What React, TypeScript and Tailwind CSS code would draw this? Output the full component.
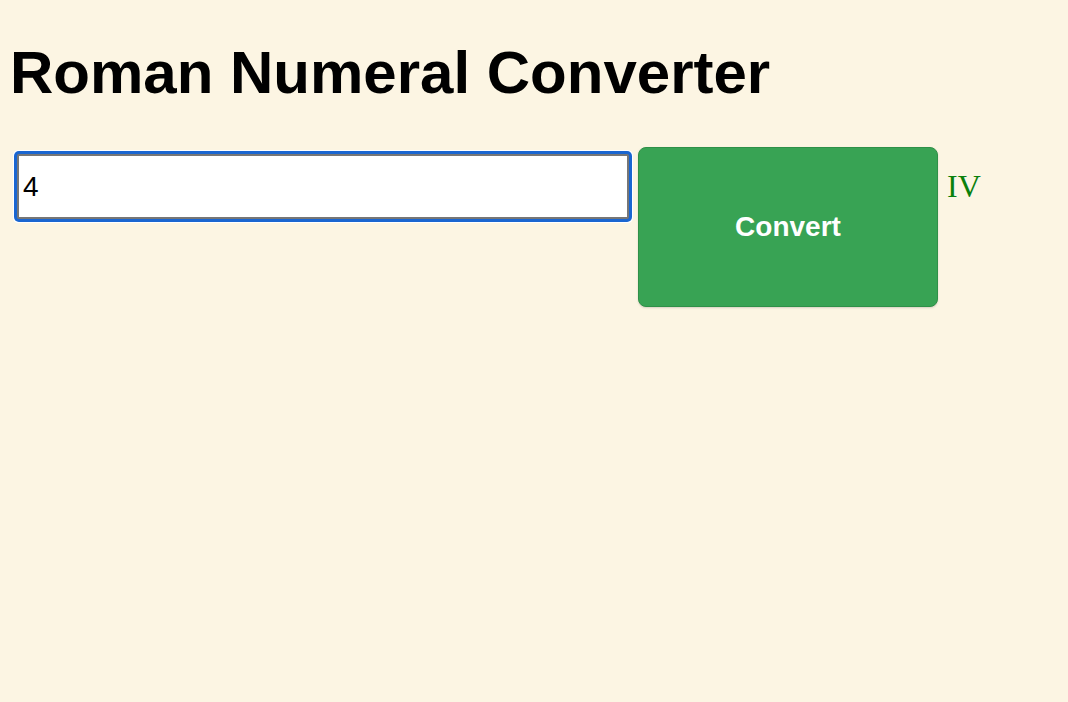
import React, { useState } from 'react';

const toRoman = (n: number): string => {
  const map: [number, string][] = [
    [1000, 'M'], [900, 'CM'], [500, 'D'], [400, 'CD'], [100, 'C'], [90, 'XC'],
    [50, 'L'], [40, 'XL'], [10, 'X'], [9, 'IX'], [5, 'V'], [4, 'IV'], [1, 'I'],
  ];
  let out = '';
  for (const [v, s] of map) {
    while (n >= v) {
      out += s;
      n -= v;
    }
  }
  return out;
};

const App: React.FC = () => {
  const [value, setValue] = useState('4');
  const [result, setResult] = useState('IV');

  return (
    <div className="min-h-screen bg-[#fcf5e3] pt-[38px] px-[10px] text-black font-['Liberation_Sans',Arial,sans-serif]">
      {/* Title */}
      <h1 className="text-[60px] font-bold leading-[69px]">Roman Numeral Converter</h1>

      {/* Form row */}
      <div className="flex items-start mt-[40px]">
        <input
          type="text"
          value={value}
          onChange={(e) => setValue(e.target.value)}
          className="ml-[7px] mt-[7px] w-[612px] h-[65px] bg-white border-2 border-[#767676] rounded-[2px] px-[4px] text-[28px] outline-none shadow-[0_0_0_3px_#1a66d1,0_0_0_4px_#ffffff]"
        />
        <button
          onClick={() => setResult(toRoman(Number(value)))}
          className="ml-[9px] w-[300px] h-[160px] bg-[#38a354] border border-[#2f9048] rounded-[8px] text-white text-[28px] font-bold shadow-[0_1px_2px_rgba(0,0,0,0.15)]"
        >
          Convert
        </button>
        <div className="ml-[9px] mt-[21px] text-[32px] leading-[37px] text-[#0b800b] font-['Liberation_Serif','Times_New_Roman',serif]">
          {result}
        </div>
      </div>
    </div>
  );
};

export default App;
